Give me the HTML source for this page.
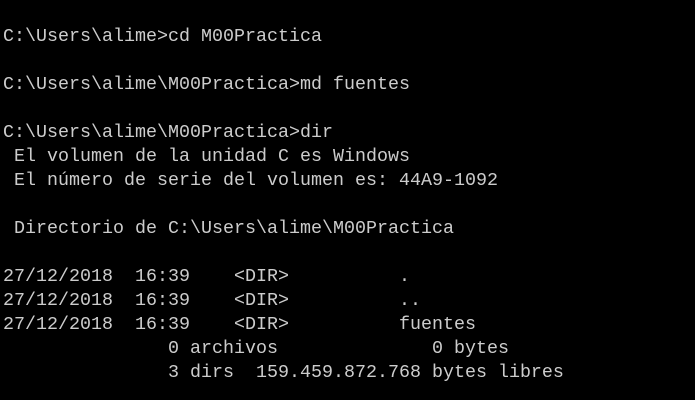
<!DOCTYPE html>
<html><head><meta charset="utf-8"><style>
html,body{margin:0;padding:0;background:#000;width:695px;height:400px;overflow:hidden}
pre{margin:0;position:absolute;left:3px;top:25px;font-family:"Liberation Mono",monospace;font-size:18.33px;line-height:24px;color:#cccccc;white-space:pre}
</style></head><body><pre>
C:\Users\alime&gt;cd M00Practica

C:\Users\alime\M00Practica&gt;md fuentes

C:\Users\alime\M00Practica&gt;dir
 El volumen de la unidad C es Windows
 El número de serie del volumen es: 44A9-1092

 Directorio de C:\Users\alime\M00Practica

27/12/2018  16:39    &lt;DIR&gt;          .
27/12/2018  16:39    &lt;DIR&gt;          ..
27/12/2018  16:39    &lt;DIR&gt;          fuentes
               0 archivos              0 bytes
               3 dirs  159.459.872.768 bytes libres
</pre></body></html>
